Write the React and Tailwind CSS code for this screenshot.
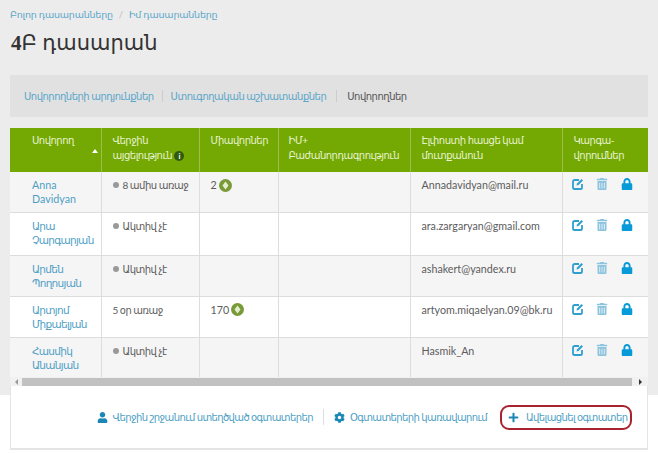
import React from "react";
import { FaUser, FaCog, FaPlus, FaLock, FaTrashAlt } from "react-icons/fa";

const rows = [
  { a: "Anna", b: "Davidyan", latin: true, seen: "8 ամիս առաջ", dot: true, pts: "2", mail: "Annadavidyan@mail.ru", h: "h-[40px]" },
  { a: "Արա", b: "Չարգարյան", seen: "Ակտիվ չէ", dot: true, pts: "", mail: "ara.zargaryan@gmail.com", h: "h-[43px]" },
  { a: "Արմեն", b: "Պողոսյան", seen: "Ակտիվ չէ", dot: true, pts: "", mail: "ashakert@yandex.ru", h: "h-[41px]" },
  { a: "Արտյոմ", b: "Միքաելյան", seen: "5 օր առաջ", dot: false, pts: "170", mail: "artyom.miqaelyan.09@bk.ru", h: "h-[41px]" },
  { a: "Հասմիկ", b: "Անանյան", seen: "Ակտիվ չէ", dot: true, pts: "", mail: "Hasmik_An", h: "h-[40px]" },
];

function Coin() {
  return (
    <svg width="13" height="13" viewBox="0 0 13 13" className="inline-block">
      <circle cx="6.5" cy="6.5" r="6.5" fill="#7a9a38" />
      <path d="M6.5 2.5 L9.5 6.5 L6.5 10.5 L3.5 6.5 Z" fill="#e4efd0" />
    </svg>
  );
}

function EditIcon() {
  return (
    <svg width="12" height="12" viewBox="0 0 12 12" fill="none">
      <path d="M7 2H2.6C1.7 2 1 2.7 1 3.6v5.8C1 10.3 1.7 11 2.6 11h5.8c.9 0 1.6-.7 1.6-1.6V6" stroke="#2f9fd0" strokeWidth="1.8" />
      <path d="M4.5 7.5 L5 5.5 L9.5 1 L11 2.5 L6.5 7 Z" fill="#2f9fd0" />
    </svg>
  );
}

function Th({ children, className = "" }) {
  return (
    <th className={`border-r border-[#9cbf4e] last:border-r-0 align-top text-left font-normal pt-[5px] leading-[15px] text-[10px] tracking-[-0.5px] text-[#e8f3d0] whitespace-nowrap ${className}`}>
      {children}
    </th>
  );
}

export default function App() {
  return (
    <div className="w-[658px] h-[453px] overflow-hidden bg-white text-[#5c5c5c] font-['Lato','Noto_Sans','DejaVu_Sans',sans-serif]">
      <div className="h-[395px] bg-[#ececec] px-[10px] flex flex-col">
        <div className="pt-[8px] h-[26px] text-[9.5px] tracking-[-0.2px] leading-[14px] text-[#5ba6c9] flex whitespace-nowrap">
          <span>Բոլոր դասարանները</span>
          <span className="mx-[6px] text-[#bbb]">/</span>
          <span>Իմ դասարանները</span>
        </div>
        <div className="h-[41px] pt-[2px] pl-[1px] text-[21px] leading-[28px] text-[#333] whitespace-nowrap">
          <span className="font-bold font-['Liberation_Serif',serif]">4</span>Բ դասարան
        </div>
        <div className="mt-[8px] h-[42px] bg-[#e1e1e1] flex items-center pl-[14px] text-[10px] tracking-[-0.5px] text-[#5ba6c9] whitespace-nowrap">
          <span>Սովորողների արդյունքներ</span>
          <span className="mx-[8px] h-[12px] border-l border-[#ccc]" />
          <span>Ստուգողական աշխատանքներ</span>
          <span className="mx-[10px] h-[12px] border-l border-[#ccc]" />
          <span className="text-[#555]">Սովորողներ</span>
        </div>
        <div className="mt-[11px] w-[638px]">
          <table className="w-[638px] table-fixed border-collapse text-[10.7px]">
            <thead>
              <tr className="h-[44px] bg-[#74a803]">
                <Th className="w-[91px] pl-[22px] relative">
                  Սովորող
                  <span className="absolute right-[3px] top-[21px] w-0 h-0 border-x-[3px] border-x-transparent border-b-[4px] border-b-white" />
                </Th>
                <Th className="w-[98px] pl-[11px]">
                  Վերջին<br />այցելություն{" "}
                  <span className="inline-flex w-[10px] h-[10px] rounded-full bg-[#2f5a10] text-white text-[8px] leading-none items-center justify-center font-bold align-middle">i</span>
                </Th>
                <Th className="w-[79px] pl-[11px]">Միավորներ</Th>
                <Th className="w-[132px] pl-[10px]">ԻՄ+<br />Բաժանորդագրություն</Th>
                <Th className="w-[152px] pl-[11px]">Էլփոստի հասցե կամ<br />մուտքանուն</Th>
                <Th className="w-[86px] pl-[11px]">Կարգա-<br />վորումներ</Th>
              </tr>
            </thead>
            <tbody>
              {rows.map((r, i) => (
                <tr key={r.a} className={`${r.h} border-b border-[#ddd] last:border-b-0 ${i % 2 === 0 ? "bg-[#f5f5f5]" : "bg-white"}`}>
                  <td className={`align-top pl-[22px] pt-[6px] leading-[14px] text-[#4f9fc5] border-r border-[#ddd] whitespace-nowrap ${r.latin ? "" : "text-[10.5px] tracking-[-0.7px]"}`}>
                    {r.a}<br />{r.b}
                  </td>
                  <td className="align-top pl-[11px] pt-[6px] leading-[14px] border-r border-[#ddd] whitespace-nowrap">
                    {r.dot && <span className="inline-block w-[6px] h-[6px] rounded-full bg-[#999] mr-[4px] align-[1px]" />}
                    <span className="text-[10px] tracking-[-0.5px]">{r.seen}</span>
                  </td>
                  <td className="align-top pl-[11px] pt-[6px] leading-[14px] border-r border-[#ddd]">
                    {r.pts && (
                      <span className="inline-flex items-center gap-[2px]">
                        {r.pts} <Coin />
                      </span>
                    )}
                  </td>
                  <td className="border-r border-[#ddd]" />
                  <td className="align-top pl-[11px] pt-[6px] leading-[14px] border-r border-[#ddd] whitespace-nowrap">{r.mail}</td>
                  <td className="align-top pl-[9px] pt-[6px]">
                    <div className="flex items-center gap-[12.5px] text-[12px]">
                      <EditIcon />
                      <FaTrashAlt className="text-[#8cc4de]" />
                      <FaLock className="text-[#069ad8]" />
                    </div>
                  </td>
                </tr>
              ))}
            </tbody>
          </table>
          <div className="h-[9px] bg-[#f1f1f1] flex items-center">
            <span className="w-[12px] flex justify-center"><span className="w-0 h-0 border-y-[3px] border-y-transparent border-r-[3px] border-r-[#999]" /></span>
            <div className="flex-1 h-[8px] bg-[#c1c1c1]" />
            <span className="w-[16px] flex justify-center"><span className="w-0 h-0 border-y-[3px] border-y-transparent border-l-[3px] border-l-[#333]" /></span>
          </div>
        </div>
      </div>
      <div className="ml-[10px] w-[638px] h-[64px] -mt-[9px] relative bg-white border-b-2 border-x border-[#e4e4e4] flex items-center justify-end pr-[15px] text-[10px] tracking-[-0.6px] text-[#4f9fc5] whitespace-nowrap">
        <FaUser className="text-[#1b87b5] text-[11px] mr-[5px] shrink-0" />
        <span>Վերջին շրջանում ստեղծված օգտատերեր</span>
        <span className="mx-[10px] h-[16px] border-l border-[#ddd]" />
        <FaCog className="text-[#1b87b5] text-[11px] mr-[5px] shrink-0" />
        <span>Օգտատերերի կառավարում</span>
        <span className="ml-[13px] h-[25px] w-[132px] pl-[6px] flex items-center border-2 border-[#a8232f] rounded-[9px]">
          <FaPlus className="text-[#1b87b5] text-[11px] mr-[7px] shrink-0" />
          Ավելացնել օգտատեր
        </span>
      </div>
    </div>
  );
}
